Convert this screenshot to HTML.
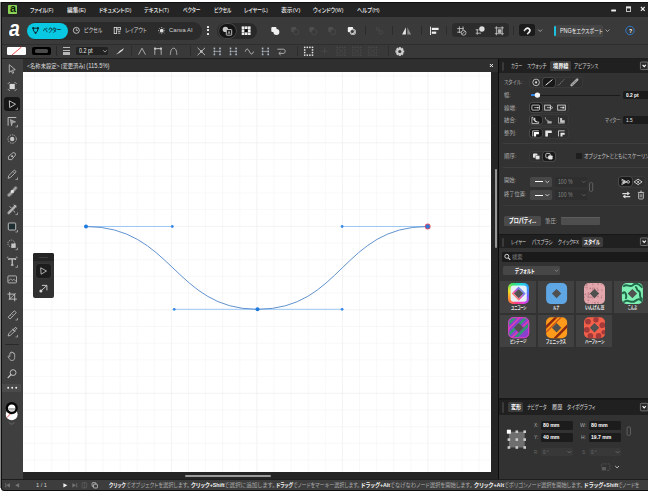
<!DOCTYPE html>
<html lang="ja"><head><meta charset="utf-8"><title>Affinity</title>
<style>
html,body{margin:0;padding:0;background:#fff;overflow:hidden;}
#app{position:relative;width:648px;height:495px;overflow:hidden;background:#fff;font-family:"Liberation Sans","Noto Sans CJK JP",sans-serif;font-feature-settings:"palt";}
#app div,#app svg,#app span.t{position:absolute;}
#app svg{overflow:visible;}
span.t{white-space:nowrap;line-height:10px;height:10px;transform-origin:0 50%;}
</style></head><body><div id="app">
<div style="left:0.00px;top:2.00px;width:1.00px;height:486.00px;background:#858585;"></div>
<div style="left:1.00px;top:2.00px;width:647.00px;height:489.00px;background:#101010;border-radius:0 0 0 3px"></div>
<div style="left:2.00px;top:2.60px;width:646.00px;height:14.40px;background:#242424;"></div>
<div style="left:2.00px;top:17.00px;width:646.00px;height:26.50px;background:#3a3a3a;"></div>
<div style="left:2.00px;top:44.00px;width:646.00px;height:14.00px;background:#393939;"></div>
<div style="left:2.00px;top:43.90px;width:646.00px;height:1.10px;background:#2e2e2e;"></div>
<div style="left:2.00px;top:57.90px;width:646.00px;height:1.10px;background:#1e1e1e;"></div>
<div style="left:2.00px;top:58.60px;width:20.50px;height:420.90px;background:#3f3f3f;"></div>
<div style="left:22.50px;top:59.00px;width:475.40px;height:13.10px;background:#2f2f2f;"></div>
<div style="left:22.50px;top:72.10px;width:475.40px;height:407.40px;background:#252525;"></div>
<div style="left:22.50px;top:72.10px;width:468.60px;height:399.70px;background:#ffffff;"></div>
<div style="left:497.90px;top:58.60px;width:1.30px;height:420.90px;background:#0c0c0c;"></div>
<div style="left:499.20px;top:58.60px;width:148.80px;height:420.90px;background:#323232;"></div>
<div style="left:2.00px;top:480.00px;width:646.00px;height:10.00px;background:#3d3d3d;border-radius:0 0 0 2.5px"></div>
<div style="left:1.80px;top:479.00px;width:646.20px;height:0.90px;background:#1e1e1e;"></div>
<div style="left:8.00px;top:4.50px;width:9.20px;height:9.10px;background:#8ad254;border-radius:0.8px"></div>
<span class="t" style="left:9.70px;top:3.30px;font-size:11.5px;color:#0c1a06;font-weight:700;transform:scaleX(0.937);">a</span>
<span class="t" style="left:30.00px;top:5.10px;font-size:6.2px;color:#f2f2f2;font-weight:500;transform:scaleX(0.794);">ファイル(F)</span>
<span class="t" style="left:66.70px;top:5.10px;font-size:6.2px;color:#f2f2f2;font-weight:500;transform:scaleX(0.921);">編集(E)</span>
<span class="t" style="left:98.70px;top:5.10px;font-size:6.2px;color:#f2f2f2;font-weight:500;transform:scaleX(0.804);">ドキュメント(D)</span>
<span class="t" style="left:144.00px;top:5.10px;font-size:6.2px;color:#f2f2f2;font-weight:500;transform:scaleX(0.849);">テキスト(T)</span>
<span class="t" style="left:182.70px;top:5.10px;font-size:6.2px;color:#f2f2f2;font-weight:500;transform:scaleX(0.749);">ベクター</span>
<span class="t" style="left:213.50px;top:5.10px;font-size:6.2px;color:#f2f2f2;font-weight:500;transform:scaleX(0.761);">ピクセル</span>
<span class="t" style="left:244.30px;top:5.10px;font-size:6.2px;color:#f2f2f2;font-weight:500;transform:scaleX(0.794);">レイヤー(L)</span>
<span class="t" style="left:281.30px;top:5.10px;font-size:6.2px;color:#f2f2f2;font-weight:500;transform:scaleX(0.941);">表示(V)</span>
<span class="t" style="left:313.30px;top:5.10px;font-size:6.2px;color:#f2f2f2;font-weight:500;transform:scaleX(0.838);">ウィンドウ(W)</span>
<span class="t" style="left:356.70px;top:5.10px;font-size:6.2px;color:#f2f2f2;font-weight:500;transform:scaleX(0.858);">ヘルプ(H)</span>
<svg style="left:611px;top:9px;" width="7" height="4" viewBox="0 0 7 4"><g transform="translate(0.20 0.50)"><rect x="0" y="0" width="4.8" height="2" rx="0.4" fill="#ececec"/></g></svg>
<svg style="left:626px;top:6px;" width="6" height="7" viewBox="0 0 6 7"><g transform="translate(0.00 0.50)"><rect x="0.4" y="0.4" width="4.2" height="4.6" fill="none" stroke="#e8e8e8" stroke-width="0.8"/><rect x="0.2" y="0.2" width="4.6" height="1.7" fill="#e8e8e8"/></g></svg>
<svg style="left:640px;top:6px;" width="7" height="7" viewBox="0 0 7 7"><g transform="translate(0.60 0.70)"><path d="M0.3 0.3L4.1 4.1M4.1 0.3L0.3 4.1" stroke="#ececec" stroke-width="1.15"/></g></svg>
<span class="t" style="left:26.50px;top:60.60px;font-size:6px;color:#dcdcdc;font-weight:400;transform:scaleX(0.879);">&lt;名称未設定&gt; [変更済み] <span style="font-size:1.1em">(115.5%)</span></span>
<svg style="left:489px;top:63px;" width="6" height="6" viewBox="0 0 6 6"><g transform="translate(0.60 0.70)"><path d="M0.3 0.3L3.3 3.3M3.3 0.3L0.3 3.3" stroke="#f0f0f0" stroke-width="1"/></g></svg>
<svg style="left:0px;top:0px;" width="649" height="496" viewBox="0 0 649 496"><g transform="translate(0.00 0.00)"><path d="M34.60 72.1V471.8" stroke="#f3f3f3" stroke-width="0.6"/><path d="M51.70 72.1V471.8" stroke="#f3f3f3" stroke-width="0.6"/><path d="M68.80 72.1V471.8" stroke="#f3f3f3" stroke-width="0.6"/><path d="M85.90 72.1V471.8" stroke="#e9e9e9" stroke-width="0.6"/><path d="M103.00 72.1V471.8" stroke="#f3f3f3" stroke-width="0.6"/><path d="M120.10 72.1V471.8" stroke="#f3f3f3" stroke-width="0.6"/><path d="M137.20 72.1V471.8" stroke="#f3f3f3" stroke-width="0.6"/><path d="M154.30 72.1V471.8" stroke="#f3f3f3" stroke-width="0.6"/><path d="M171.40 72.1V471.8" stroke="#e9e9e9" stroke-width="0.6"/><path d="M188.50 72.1V471.8" stroke="#f3f3f3" stroke-width="0.6"/><path d="M205.60 72.1V471.8" stroke="#f3f3f3" stroke-width="0.6"/><path d="M222.70 72.1V471.8" stroke="#f3f3f3" stroke-width="0.6"/><path d="M239.80 72.1V471.8" stroke="#f3f3f3" stroke-width="0.6"/><path d="M256.90 72.1V471.8" stroke="#e9e9e9" stroke-width="0.6"/><path d="M274.00 72.1V471.8" stroke="#f3f3f3" stroke-width="0.6"/><path d="M291.10 72.1V471.8" stroke="#f3f3f3" stroke-width="0.6"/><path d="M308.20 72.1V471.8" stroke="#f3f3f3" stroke-width="0.6"/><path d="M325.30 72.1V471.8" stroke="#f3f3f3" stroke-width="0.6"/><path d="M342.40 72.1V471.8" stroke="#e9e9e9" stroke-width="0.6"/><path d="M359.50 72.1V471.8" stroke="#f3f3f3" stroke-width="0.6"/><path d="M376.60 72.1V471.8" stroke="#f3f3f3" stroke-width="0.6"/><path d="M393.70 72.1V471.8" stroke="#f3f3f3" stroke-width="0.6"/><path d="M410.80 72.1V471.8" stroke="#f3f3f3" stroke-width="0.6"/><path d="M427.90 72.1V471.8" stroke="#e9e9e9" stroke-width="0.6"/><path d="M445.00 72.1V471.8" stroke="#f3f3f3" stroke-width="0.6"/><path d="M462.10 72.1V471.8" stroke="#f3f3f3" stroke-width="0.6"/><path d="M479.20 72.1V471.8" stroke="#f3f3f3" stroke-width="0.6"/><path d="M23 76.00H491.1" stroke="#f3f3f3" stroke-width="0.6"/><path d="M23 92.70H491.1" stroke="#f3f3f3" stroke-width="0.6"/><path d="M23 109.40H491.1" stroke="#f3f3f3" stroke-width="0.6"/><path d="M23 126.10H491.1" stroke="#f3f3f3" stroke-width="0.6"/><path d="M23 142.80H491.1" stroke="#e9e9e9" stroke-width="0.6"/><path d="M23 159.50H491.1" stroke="#f3f3f3" stroke-width="0.6"/><path d="M23 176.20H491.1" stroke="#f3f3f3" stroke-width="0.6"/><path d="M23 192.90H491.1" stroke="#f3f3f3" stroke-width="0.6"/><path d="M23 209.60H491.1" stroke="#f3f3f3" stroke-width="0.6"/><path d="M23 226.30H491.1" stroke="#e9e9e9" stroke-width="0.6"/><path d="M23 243.00H491.1" stroke="#f3f3f3" stroke-width="0.6"/><path d="M23 259.70H491.1" stroke="#f3f3f3" stroke-width="0.6"/><path d="M23 276.40H491.1" stroke="#f3f3f3" stroke-width="0.6"/><path d="M23 293.10H491.1" stroke="#f3f3f3" stroke-width="0.6"/><path d="M23 309.80H491.1" stroke="#e9e9e9" stroke-width="0.6"/><path d="M23 326.50H491.1" stroke="#f3f3f3" stroke-width="0.6"/><path d="M23 343.20H491.1" stroke="#f3f3f3" stroke-width="0.6"/><path d="M23 359.90H491.1" stroke="#f3f3f3" stroke-width="0.6"/><path d="M23 376.60H491.1" stroke="#f3f3f3" stroke-width="0.6"/><path d="M23 393.30H491.1" stroke="#e9e9e9" stroke-width="0.6"/><path d="M23 410.00H491.1" stroke="#f3f3f3" stroke-width="0.6"/><path d="M23 426.70H491.1" stroke="#f3f3f3" stroke-width="0.6"/><path d="M23 443.40H491.1" stroke="#f3f3f3" stroke-width="0.6"/><path d="M23 460.10H491.1" stroke="#f3f3f3" stroke-width="0.6"/></g></svg>
<svg style="left:0px;top:0px;" width="649" height="496" viewBox="0 0 649 496"><g transform="translate(0.00 0.00)"><path d="M86 226.5H172.3M174.2 309.3H342.1M342.1 226.5H427.7" stroke="#86bcf2" stroke-width="0.8" fill="none"/><path d="M86 226.5C172.3 226.5 174.2 309.3 257.5 309.3C342.1 309.3 342.1 226.5 427.7 226.5" stroke="#4f86c8" stroke-width="0.9" fill="none"/><circle cx="172.3" cy="226.5" r="1.4" fill="#3a8be6"/><circle cx="174.2" cy="309.3" r="1.4" fill="#3a8be6"/><circle cx="342.1" cy="309.3" r="1.4" fill="#3a8be6"/><circle cx="342.1" cy="226.5" r="1.4" fill="#3a8be6"/><circle cx="86" cy="226.5" r="2" fill="#1f7ae0"/><circle cx="257.5" cy="309.3" r="2" fill="#1f7ae0"/><circle cx="427.7" cy="226.5" r="2.9" fill="#e0566b"/><circle cx="427.7" cy="226.5" r="2.1" fill="#2a78d8"/></g></svg>
<div style="left:495.00px;top:168.60px;width:2.20px;height:79.90px;background:#959595;border-radius:1px"></div>
<div style="left:185.00px;top:474.90px;width:86.00px;height:1.80px;background:#9a9a9a;border-radius:1px"></div>
<span class="t" style="left:109.30px;top:480.20px;font-size:6px;color:#f0f0f0;font-weight:700;transform:scaleX(0.796);">クリック</span>
<span class="t" style="left:126.00px;top:480.20px;font-size:6px;color:#a8a8a8;font-weight:400;transform:scaleX(0.869);">でオブジェクトを選択します。</span>
<span class="t" style="left:190.70px;top:480.20px;font-size:6px;color:#f0f0f0;font-weight:700;transform:scaleX(0.889);">クリック+Shift</span>
<span class="t" style="left:224.30px;top:480.20px;font-size:6px;color:#a8a8a8;font-weight:400;transform:scaleX(0.949);">で選択に追加します。</span>
<span class="t" style="left:276.30px;top:480.20px;font-size:6px;color:#f0f0f0;font-weight:700;transform:scaleX(0.790);">ドラッグ</span>
<span class="t" style="left:293.30px;top:480.20px;font-size:6px;color:#a8a8a8;font-weight:400;transform:scaleX(0.837);">でノードをマーキー選択します。</span>
<span class="t" style="left:361.00px;top:480.20px;font-size:6px;color:#f0f0f0;font-weight:700;transform:scaleX(0.878);">ドラッグ+Alt</span>
<span class="t" style="left:390.00px;top:480.20px;font-size:6px;color:#a8a8a8;font-weight:400;transform:scaleX(0.888);">でなげなわノード選択を開始します。</span>
<span class="t" style="left:473.70px;top:480.20px;font-size:6px;color:#f0f0f0;font-weight:700;transform:scaleX(0.924);">クリック+Alt</span>
<span class="t" style="left:503.70px;top:480.20px;font-size:6px;color:#a8a8a8;font-weight:400;transform:scaleX(0.874);">でポリゴンノード選択を開始します。</span>
<span class="t" style="left:583.70px;top:480.20px;font-size:6px;color:#f0f0f0;font-weight:700;transform:scaleX(0.894);">ドラッグ+Shift</span>
<span class="t" style="left:618.00px;top:480.20px;font-size:6px;color:#a8a8a8;font-weight:400;transform:scaleX(0.805);">でノードを</span>
<span class="t" style="left:35.80px;top:480.20px;font-size:6px;color:#d0d0d0;font-weight:500;transform:scaleX(0.933);">1 / 1</span>
<svg style="left:5px;top:483px;" width="7" height="6" viewBox="0 0 7 6"><g transform="translate(0.40 0.00)"><path d="M0.4 0.2V4.4" stroke="#777" stroke-width="0.8"/><path d="M4.5 0.2V4.4L1 2.3Z" fill="#777"/></g></svg>
<svg style="left:14px;top:483px;" width="7" height="6" viewBox="0 0 7 6"><g transform="translate(0.80 0.00)"><path d="M4.3 0.2V4.4L0.3 2.3Z" fill="#777"/></g></svg>
<svg style="left:63px;top:483px;" width="7" height="6" viewBox="0 0 7 6"><g transform="translate(0.20 0.00)"><path d="M0.2 0.2V4.4L4.2 2.3Z" fill="#f0f0f0"/></g></svg>
<svg style="left:72px;top:483px;" width="7" height="6" viewBox="0 0 7 6"><g transform="translate(0.20 0.00)"><path d="M0.2 0.2V4.4L3.7 2.3Z" fill="#777"/><path d="M4.5 0.2V4.4" stroke="#777" stroke-width="0.8"/></g></svg>
<svg style="left:81px;top:482px;" width="8" height="8" viewBox="0 0 8 8"><g transform="translate(0.70 0.30)"><rect x="0.4" y="0.4" width="4.6" height="5.2" rx="0.6" fill="none" stroke="#666" stroke-width="0.7"/><path d="M2.7 0.4V5.6" stroke="#666" stroke-width="0.6"/></g></svg>
<svg style="left:91px;top:482px;" width="9" height="8" viewBox="0 0 9 8"><g transform="translate(0.70 0.30)"><rect x="0.4" y="0.4" width="3.8" height="3.8" rx="0.6" fill="none" stroke="#ddd" stroke-width="0.7"/><rect x="1.9" y="1.9" width="3.8" height="3.8" rx="0.6" fill="#3a3a3a" stroke="#ddd" stroke-width="0.7"/></g></svg>
<span class="t" style="left:8.80px;top:24.20px;font-size:21.5px;color:#ffffff;font-weight:700;transform:scaleX(0.902);font-style:italic;">a</span>
<div style="left:26.50px;top:21.80px;width:175.00px;height:17.80px;background:#2b2b2b;border-radius:9px"></div>
<div style="left:27.30px;top:22.80px;width:40.90px;height:15.90px;background:#08c8e2;border-radius:8px"></div>
<span class="t" style="left:42.60px;top:25.40px;font-size:6.2px;color:#0c2a33;font-weight:500;transform:scaleX(0.801);">ベクター</span>
<span class="t" style="left:83.50px;top:25.40px;font-size:6.2px;color:#d2d2d2;font-weight:400;transform:scaleX(0.804);">ピクセル</span>
<span class="t" style="left:124.70px;top:25.40px;font-size:6.2px;color:#d2d2d2;font-weight:400;transform:scaleX(0.804);">レイアウト</span>
<span class="t" style="left:168.60px;top:25.40px;font-size:6.2px;color:#d2d2d2;font-weight:400;transform:scaleX(0.936);">Canva AI</span>
<svg style="left:31px;top:26px;" width="10" height="10" viewBox="0 0 10 10"><g transform="translate(0.90 0.60)"><path d="M1.3 1.6H6.1M1.3 1.6C1.3 4.2 2.4 5.6 3.7 6.2C5 5.6 6.1 4.2 6.1 1.6" fill="none" stroke="#0c2a33" stroke-width="1"/><circle cx="1.3" cy="1.6" r="1.1" fill="#0c2a33"/><circle cx="6.1" cy="1.6" r="1.1" fill="#0c2a33"/><circle cx="3.7" cy="6.2" r="1.1" fill="#0c2a33"/></g></svg>
<svg style="left:72px;top:26px;" width="9" height="9" viewBox="0 0 9 9"><g transform="translate(0.80 0.90)"><circle cx="3.5" cy="3.5" r="3" fill="none" stroke="#ddd" stroke-width="0.8"/><path d="M3.5 3.5V1.6M3.5 3.5H5.2" stroke="#ddd" stroke-width="0.7"/></g></svg>
<svg style="left:113px;top:27px;" width="9" height="8" viewBox="0 0 9 8"><g transform="translate(0.80 0.00)"><rect x="0.4" y="0.4" width="2.4" height="6.2" fill="none" stroke="#ddd" stroke-width="0.8"/><rect x="4" y="0.4" width="2.6" height="2.4" fill="none" stroke="#ddd" stroke-width="0.8"/><path d="M4 4.4H6.6M4 6.2H6.6" stroke="#ddd" stroke-width="0.8"/></g></svg>
<svg style="left:157px;top:26px;" width="9" height="10" viewBox="0 0 9 10"><g transform="translate(0.50 0.70)"><circle cx="4.2" cy="4" r="1.9" fill="#ddd"/><path d="M4.2 0.3V1.3M4.2 6.7V7.5M0.5 4H1.5M6.9 4H7.5M1.5 1.4L2.2 2.1M6.2 5.9L6.8 6.5M6.8 1.4L6.2 2.1M1.6 6.5L2.2 5.9" stroke="#ddd" stroke-width="0.8"/></g></svg>
<div style="left:206.50px;top:25.60px;width:2.60px;height:2.20px;background:#f0f0f0;border-radius:0.6px"></div>
<div style="left:206.50px;top:29.20px;width:2.60px;height:2.20px;background:#f0f0f0;border-radius:0.6px"></div>
<div style="left:206.50px;top:32.80px;width:2.60px;height:2.20px;background:#f0f0f0;border-radius:0.6px"></div>
<div style="left:217.30px;top:23.20px;width:39.50px;height:15.50px;background:#292929;border-radius:8px"></div>
<div style="left:218.70px;top:24.30px;width:17.60px;height:13.40px;background:#151515;border-radius:7px;box-shadow:0 0 0 0.7px #505050"></div>
<svg style="left:222px;top:26px;" width="12" height="12" viewBox="0 0 12 12"><g transform="translate(0.40 0.40)"><circle cx="3" cy="3" r="2.7" fill="#c8c8c8"/><rect x="3.9" y="3.2" width="5.4" height="5.6" rx="0.6" fill="#151515" stroke="#e8e8e8" stroke-width="0.8"/><path d="M5.5 7.6L6.6 4.8L7.7 7.6M5.9 6.7H7.3" stroke="#e8e8e8" stroke-width="0.5" fill="none"/></g></svg>
<svg style="left:241px;top:26px;" width="11" height="11" viewBox="0 0 11 11"><g transform="translate(0.70 0.40)"><rect x="0.0" y="0.0" width="2.7" height="2.6" fill="#f0f0f0"/><rect x="0.0" y="3.0" width="2.7" height="2.6" fill="#f0f0f0"/><rect x="0.0" y="6.0" width="2.7" height="2.6" fill="#f0f0f0"/><rect x="3.1" y="0.0" width="2.7" height="2.6" fill="#f0f0f0"/><rect x="3.1" y="3.0" width="2.7" height="2.6" fill="#0c0c0c"/><rect x="3.1" y="6.0" width="2.7" height="2.6" fill="#f0f0f0"/><rect x="6.2" y="0.0" width="2.7" height="2.6" fill="#f0f0f0"/><rect x="6.2" y="3.0" width="2.7" height="2.6" fill="#f0f0f0"/><rect x="6.2" y="6.0" width="2.7" height="2.6" fill="#f0f0f0"/></g></svg>
<svg style="left:271px;top:26px;" width="10" height="11" viewBox="0 0 10 11"><g transform="translate(0.00 0.60)"><rect x="0.3" y="0.3" width="5.2" height="5.2" rx="1" fill="#f0f0f0"/><circle cx="5.4" cy="5.4" r="3" fill="#f0f0f0"/></g></svg>
<svg style="left:290px;top:26px;" width="11" height="11" viewBox="0 0 11 11"><g transform="translate(0.80 0.60)"><rect x="0.4" y="0.4" width="5" height="5" rx="1" fill="#4e4e4e"/><circle cx="5.4" cy="5.4" r="2.7" fill="#3a3a3a" stroke="#4e4e4e" stroke-width="0.7"/></g></svg>
<svg style="left:308px;top:26px;" width="11" height="11" viewBox="0 0 11 11"><g transform="translate(0.80 0.60)"><rect x="0.4" y="0.4" width="5" height="5" rx="1" fill="#4e4e4e"/><circle cx="5.4" cy="5.4" r="2.7" fill="#3a3a3a" stroke="#4e4e4e" stroke-width="0.7"/></g></svg>
<svg style="left:327px;top:26px;" width="11" height="11" viewBox="0 0 11 11"><g transform="translate(0.80 0.60)"><rect x="0.4" y="0.4" width="5" height="5" rx="1" fill="#4e4e4e"/><circle cx="5.4" cy="5.4" r="2.7" fill="#3a3a3a" stroke="#4e4e4e" stroke-width="0.7"/></g></svg>
<svg style="left:347px;top:26px;" width="10" height="11" viewBox="0 0 10 11"><g transform="translate(0.50 0.60)"><rect x="0.3" y="0.3" width="5.4" height="5.4" rx="1" fill="#f0f0f0"/><circle cx="5.4" cy="5.4" r="3" fill="#f0f0f0"/><circle cx="4.9" cy="4.9" r="1.6" fill="#3a3a3a"/><circle cx="5.4" cy="5.4" r="2.2" fill="none" stroke="#3a3a3a" stroke-width="0.5"/></g></svg>
<div style="left:365.40px;top:25.70px;width:0.80px;height:9.50px;background:#2c2c2c;"></div>
<div style="left:392.10px;top:25.70px;width:0.80px;height:9.50px;background:#2c2c2c;"></div>
<div style="left:420.50px;top:25.70px;width:0.80px;height:9.50px;background:#2c2c2c;"></div>
<div style="left:446.40px;top:25.70px;width:0.80px;height:9.50px;background:#2c2c2c;"></div>
<div style="left:513.20px;top:25.70px;width:0.80px;height:9.50px;background:#2c2c2c;"></div>
<svg style="left:375px;top:26px;" width="10" height="10" viewBox="0 0 10 10"><g transform="translate(0.40 0.80)"><circle cx="2.2" cy="2.2" r="1.5" fill="none" stroke="#4e4e4e" stroke-width="0.7"/><circle cx="5.6" cy="5.6" r="1.8" fill="none" stroke="#4e4e4e" stroke-width="0.7"/><path d="M3.2 3.2L4.4 4.4" stroke="#4e4e4e" stroke-width="0.7"/></g></svg>
<svg style="left:401px;top:26px;" width="12" height="11" viewBox="0 0 12 11"><g transform="translate(0.60 0.60)"><path d="M4.3 0.6V8L0.5 8Z" fill="#e6e6e6"/><path d="M5.7 0.6V8L9.5 8Z" fill="#8c8c8c"/></g></svg>
<svg style="left:430px;top:26px;" width="10" height="11" viewBox="0 0 10 11"><g transform="translate(0.00 0.60)"><path d="M0.5 0V8.4" stroke="#f0f0f0" stroke-width="0.9"/><rect x="1.8" y="1.2" width="6.8" height="2.2" fill="#f0f0f0"/><rect x="1.8" y="5" width="4.4" height="2.2" fill="#f0f0f0"/></g></svg>
<div style="left:451.80px;top:23.40px;width:57.20px;height:14.10px;background:#2c2c2c;border-radius:4px"></div>
<svg style="left:457px;top:26px;" width="11" height="11" viewBox="0 0 11 11"><g transform="translate(0.20 0.40)"><path d="M0 2.2H6.6M2.2 0V6.6M0 5.8H4M5.8 0V4" stroke="#cdcdcd" stroke-width="0.8" fill="none"/><circle cx="6.4" cy="6.4" r="2.4" fill="#2a2a2a" stroke="#cdcdcd" stroke-width="0.8"/><path d="M4.9 7.6L7.8 5" stroke="#cdcdcd" stroke-width="0.7"/></g></svg>
<svg style="left:475px;top:26px;" width="11" height="11" viewBox="0 0 11 11"><g transform="translate(0.70 0.20)"><path d="M1.6 3.4V8.6M0 7H5.4M0 3.6H3" stroke="#cdcdcd" stroke-width="0.8" fill="none"/><circle cx="6.2" cy="2.8" r="2.7" fill="#dcdcdc"/></g></svg>
<svg style="left:494px;top:26px;" width="11" height="11" viewBox="0 0 11 11"><g transform="translate(0.80 0.30)"><path d="M0 1.6H9M0 7.4H9M1.6 0V9M7.4 0V9" stroke="#cdcdcd" stroke-width="0.8"/><rect x="3" y="3" width="3.6" height="3.6" fill="#b8b8b8"/></g></svg>
<div style="left:518.90px;top:24.20px;width:16.30px;height:12.20px;background:#1b1b1b;border-radius:2.5px"></div>
<svg style="left:522px;top:26px;" width="11" height="11" viewBox="0 0 11 11"><g transform="translate(0.90 0.20)"><g transform="rotate(45 4.5 4.5)"><path d="M2.2 7V4.3A2.3 2.3 0 0 1 6.8 4.3V7" fill="none" stroke="#f4f4f4" stroke-width="1.6"/><path d="M1.3 5.9H3.1M5.9 5.9H7.7" stroke="#1a1a1a" stroke-width="0.45"/></g></g></svg>
<svg style="left:538px;top:29px;" width="6" height="5" viewBox="0 0 6 5"><g transform="translate(0.00 0.20)"><path d="M0.3 0.4L2.2 2.3L4.1 0.4" fill="none" stroke="#ccc" stroke-width="0.7"/></g></svg>
<div style="left:554.00px;top:25.20px;width:49.40px;height:11.40px;background:#444444;border-radius:1.5px"></div>
<div style="left:554.40px;top:25.60px;width:1.80px;height:10.60px;background:#19c3e0;border-radius:1px"></div>
<span class="t" style="left:559.80px;top:25.80px;font-size:6.2px;color:#f0f0f0;font-weight:400;transform:scaleX(0.782);"><span style="font-size:1.12em">PNG</span>をエクスポート</span>
<svg style="left:605px;top:29px;" width="6" height="5" viewBox="0 0 6 5"><g transform="translate(0.30 0.20)"><path d="M0.3 0.4L2.2 2.3L4.1 0.4" fill="none" stroke="#ccc" stroke-width="0.7"/></g></svg>
<svg style="left:625px;top:25px;" width="11" height="12" viewBox="0 0 11 12"><g transform="translate(0.00 0.50)"><circle cx="5" cy="5" r="4.2" fill="none" stroke="#2b80d8" stroke-width="0.9"/></g></svg>
<span class="t" style="left:628.50px;top:25.70px;font-size:6px;color:#ffffff;font-weight:700;transform:scaleX(0.871);">?</span>
<svg style="left:7px;top:47px;" width="20" height="9" viewBox="0 0 20 9"><g transform="translate(0.00 0.00)"><rect x="0" y="0" width="19" height="8" rx="1.2" fill="#fff"/><path d="M5 8L14.5 0" stroke="#f03a3a" stroke-width="0.9"/></g></svg>
<div style="left:32.00px;top:47.00px;width:19.00px;height:8.00px;background:#000;border-radius:2px"></div>
<div style="left:34.60px;top:49.40px;width:13.80px;height:3.20px;background:#4a4a4a;border-radius:1.6px"></div>
<div style="left:56.20px;top:46.40px;width:0.80px;height:9.40px;background:#292929;"></div>
<div style="left:63.00px;top:47.40px;width:7.40px;height:1.10px;background:#b8b8b8;"></div>
<div style="left:63.00px;top:49.60px;width:7.40px;height:1.70px;background:#b8b8b8;"></div>
<div style="left:63.00px;top:52.30px;width:7.40px;height:2.40px;background:#b8b8b8;"></div>
<div style="left:76.00px;top:46.60px;width:32.40px;height:8.80px;background:#222222;border-radius:1.5px"></div>
<span class="t" style="left:79.30px;top:46.10px;font-size:6.4px;color:#f0f0f0;font-weight:400;transform:scaleX(0.844);">0.2 pt</span>
<svg style="left:102px;top:49px;" width="7" height="5" viewBox="0 0 7 5"><g transform="translate(0.80 0.80)"><path d="M0.3 0.4L2.2 2.3L4.1 0.4" fill="none" stroke="#ccc" stroke-width="0.7"/></g></svg>
<svg style="left:115px;top:47px;" width="10" height="9" viewBox="0 0 10 9"><g transform="translate(0.60 0.40)"><path d="M0.3 6.8C2.5 6.2 3.4 4 4.6 3.2C6 2.2 7.4 1.8 8.1 0.4C8.2 2.2 7 3.4 5.4 4.4C4 5.2 2.6 6.8 0.3 6.8Z" fill="#e0e0e0"/></g></svg>
<div style="left:130.60px;top:46.40px;width:0.80px;height:9.60px;background:#2d2d2d;"></div>
<div style="left:190.00px;top:46.40px;width:0.80px;height:9.60px;background:#2d2d2d;"></div>
<div style="left:297.10px;top:46.40px;width:0.80px;height:9.60px;background:#2d2d2d;"></div>
<div style="left:388.40px;top:46.40px;width:0.80px;height:9.60px;background:#2d2d2d;"></div>
<svg style="left:138px;top:47px;" width="9" height="10" viewBox="0 0 9 10"><g transform="translate(0.00 0.20)"><path d="M0.6 7.4L4 1L7.4 7.4" fill="none" stroke="#c6c6c6" stroke-width="0.8"/></g></svg>
<svg style="left:154px;top:47px;" width="9" height="10" viewBox="0 0 9 10"><g transform="translate(0.00 0.20)"><path d="M0.8 7.6V3.6C0.8 1.8 2 1.4 4 1.4C6 1.4 7.2 1.8 7.2 3.6V7.6" fill="none" stroke="#c6c6c6" stroke-width="0.8"/><rect x="0" y="0.4" width="2" height="2" fill="#c6c6c6"/><rect x="6" y="0.4" width="2" height="2" fill="#c6c6c6"/><path d="M2 1.4H6" stroke="#c6c6c6" stroke-width="0.6"/></g></svg>
<svg style="left:169px;top:47px;" width="10" height="10" viewBox="0 0 10 10"><g transform="translate(0.60 0.20)"><path d="M0.8 7.6C0.8 4 1.8 1 4 1C6.2 1 7.2 4 7.2 7.6" fill="none" stroke="#c6c6c6" stroke-width="0.8"/></g></svg>
<svg style="left:196px;top:47px;" width="11" height="10" viewBox="0 0 11 10"><g transform="translate(0.80 0.00)"><path d="M0.8 0.8L8.2 8.2M8.2 0.8L0.8 8.2" stroke="#c6c6c6" stroke-width="0.9"/><circle cx="4.5" cy="4.5" r="1.2" fill="#c6c6c6"/></g></svg>
<svg style="left:213px;top:47px;" width="9" height="10" viewBox="0 0 9 10"><g transform="translate(0.60 0.20)"><path d="M0.8 0.6V8M6.4 0.6V8" stroke="#7c8692" stroke-width="0.5"/><rect x="0" y="0.4" width="1.6" height="1.6" fill="#aeb8c4"/><rect x="0" y="3.4" width="1.6" height="1.6" fill="#aeb8c4"/><rect x="0" y="6.4" width="1.6" height="1.6" fill="#aeb8c4"/><rect x="5.6" y="0.4" width="1.6" height="1.6" fill="#aeb8c4"/><rect x="5.6" y="3.4" width="1.6" height="1.6" fill="#aeb8c4"/><rect x="5.6" y="6.4" width="1.6" height="1.6" fill="#aeb8c4"/><path d="M1.6 4.2H5.6" stroke="#aeb8c4" stroke-width="0.7"/></g></svg>
<svg style="left:229px;top:47px;" width="9" height="10" viewBox="0 0 9 10"><g transform="translate(0.70 0.20)"><path d="M0.8 0.6V8M6.4 0.6V8" stroke="#7c8692" stroke-width="0.5"/><rect x="0" y="0.4" width="1.6" height="1.6" fill="#aeb8c4"/><rect x="0" y="3.4" width="1.6" height="1.6" fill="#aeb8c4"/><rect x="0" y="6.4" width="1.6" height="1.6" fill="#aeb8c4"/><rect x="5.6" y="0.4" width="1.6" height="1.6" fill="#aeb8c4"/><rect x="5.6" y="3.4" width="1.6" height="1.6" fill="#aeb8c4"/><rect x="5.6" y="6.4" width="1.6" height="1.6" fill="#aeb8c4"/><path d="M1.6 4.2H5.6" stroke="#aeb8c4" stroke-width="0.7"/></g></svg>
<svg style="left:244px;top:48px;" width="11" height="8" viewBox="0 0 11 8"><g transform="translate(0.90 0.00)"><path d="M0.4 3.6C1.4 0.2 2.8 0.2 4.4 3.4C6 6.8 7.4 6.8 8.6 3.6" fill="none" stroke="#c6c6c6" stroke-width="0.9"/></g></svg>
<svg style="left:261px;top:47px;" width="9" height="10" viewBox="0 0 9 10"><g transform="translate(0.80 0.20)"><path d="M0.8 0.6V8M6.4 0.6V8" stroke="#7c8692" stroke-width="0.5"/><rect x="0" y="0.4" width="1.6" height="1.6" fill="#aeb8c4"/><rect x="0" y="3.4" width="1.6" height="1.6" fill="#aeb8c4"/><rect x="0" y="6.4" width="1.6" height="1.6" fill="#aeb8c4"/><rect x="5.6" y="0.4" width="1.6" height="1.6" fill="#aeb8c4"/><rect x="5.6" y="3.4" width="1.6" height="1.6" fill="#aeb8c4"/><rect x="5.6" y="6.4" width="1.6" height="1.6" fill="#aeb8c4"/><path d="M1.6 4.2H5.6" stroke="#aeb8c4" stroke-width="0.7"/></g></svg>
<svg style="left:277px;top:48px;" width="10" height="9" viewBox="0 0 10 9"><g transform="translate(0.00 0.20)"><path d="M0.4 1H6.4C8.8 1 8.8 5.2 6.4 5.2H2.4" fill="none" stroke="#c6c6c6" stroke-width="0.8"/><path d="M3.6 3.6L1.8 5.2L3.6 6.8" fill="none" stroke="#c6c6c6" stroke-width="0.8"/></g></svg>
<svg style="left:303px;top:46px;" width="12" height="11" viewBox="0 0 12 11"><g transform="translate(0.95 0.60)"><rect x="0.0" y="0" width="1.5" height="1.5" fill="#e6e6e6"/><rect x="0.0" y="7.8" width="1.5" height="1.5" fill="#e6e6e6"/><rect x="2.6" y="0" width="1.5" height="1.5" fill="#e6e6e6"/><rect x="2.6" y="7.8" width="1.5" height="1.5" fill="#e6e6e6"/><rect x="0" y="2.6" width="1.5" height="1.5" fill="#e6e6e6"/><rect x="7.8" y="2.6" width="1.5" height="1.5" fill="#e6e6e6"/><rect x="5.2" y="0" width="1.5" height="1.5" fill="#e6e6e6"/><rect x="5.2" y="7.8" width="1.5" height="1.5" fill="#e6e6e6"/><rect x="0" y="5.2" width="1.5" height="1.5" fill="#e6e6e6"/><rect x="7.8" y="5.2" width="1.5" height="1.5" fill="#e6e6e6"/><rect x="7.8" y="0" width="1.5" height="1.5" fill="#e6e6e6"/><rect x="7.8" y="7.8" width="1.5" height="1.5" fill="#e6e6e6"/></g></svg>
<svg style="left:319px;top:46px;" width="12" height="11" viewBox="0 0 12 11"><g transform="translate(0.95 0.60)"><rect x="0.0" y="0" width="1.5" height="1.5" fill="#3c3c3c"/><rect x="0.0" y="7.8" width="1.5" height="1.5" fill="#3c3c3c"/><rect x="2.6" y="0" width="1.5" height="1.5" fill="#3c3c3c"/><rect x="2.6" y="7.8" width="1.5" height="1.5" fill="#3c3c3c"/><rect x="0" y="2.6" width="1.5" height="1.5" fill="#3c3c3c"/><rect x="7.8" y="2.6" width="1.5" height="1.5" fill="#3c3c3c"/><rect x="5.2" y="0" width="1.5" height="1.5" fill="#3c3c3c"/><rect x="5.2" y="7.8" width="1.5" height="1.5" fill="#3c3c3c"/><rect x="0" y="5.2" width="1.5" height="1.5" fill="#3c3c3c"/><rect x="7.8" y="5.2" width="1.5" height="1.5" fill="#3c3c3c"/><rect x="7.8" y="0" width="1.5" height="1.5" fill="#3c3c3c"/><rect x="7.8" y="7.8" width="1.5" height="1.5" fill="#3c3c3c"/><path d="M4.65 1.6V7.7M1.6 4.65H7.7" stroke="#484848" stroke-width="0.9"/></g></svg>
<svg style="left:336px;top:46px;" width="11" height="11" viewBox="0 0 11 11"><g transform="translate(0.35 0.60)"><rect x="0.0" y="0" width="1.5" height="1.5" fill="#484848"/><rect x="0.0" y="7.8" width="1.5" height="1.5" fill="#484848"/><rect x="2.6" y="0" width="1.5" height="1.5" fill="#484848"/><rect x="2.6" y="7.8" width="1.5" height="1.5" fill="#484848"/><rect x="0" y="2.6" width="1.5" height="1.5" fill="#484848"/><rect x="7.8" y="2.6" width="1.5" height="1.5" fill="#484848"/><rect x="5.2" y="0" width="1.5" height="1.5" fill="#484848"/><rect x="5.2" y="7.8" width="1.5" height="1.5" fill="#484848"/><rect x="0" y="5.2" width="1.5" height="1.5" fill="#484848"/><rect x="7.8" y="5.2" width="1.5" height="1.5" fill="#484848"/><rect x="7.8" y="0" width="1.5" height="1.5" fill="#484848"/><rect x="7.8" y="7.8" width="1.5" height="1.5" fill="#484848"/><path d="M2 2L7.3 7.3M7.3 2L2 7.3" stroke="#484848" stroke-width="0.8"/></g></svg>
<svg style="left:352px;top:46px;" width="11" height="11" viewBox="0 0 11 11"><g transform="translate(0.05 0.60)"><rect x="0.0" y="0" width="1.5" height="1.5" fill="#484848"/><rect x="0.0" y="7.8" width="1.5" height="1.5" fill="#484848"/><rect x="2.6" y="0" width="1.5" height="1.5" fill="#484848"/><rect x="2.6" y="7.8" width="1.5" height="1.5" fill="#484848"/><rect x="0" y="2.6" width="1.5" height="1.5" fill="#484848"/><rect x="7.8" y="2.6" width="1.5" height="1.5" fill="#484848"/><rect x="5.2" y="0" width="1.5" height="1.5" fill="#484848"/><rect x="5.2" y="7.8" width="1.5" height="1.5" fill="#484848"/><rect x="0" y="5.2" width="1.5" height="1.5" fill="#484848"/><rect x="7.8" y="5.2" width="1.5" height="1.5" fill="#484848"/><rect x="7.8" y="0" width="1.5" height="1.5" fill="#484848"/><rect x="7.8" y="7.8" width="1.5" height="1.5" fill="#484848"/><path d="M2 2L7.3 7.3M7.3 2L2 7.3" stroke="#484848" stroke-width="0.8"/></g></svg>
<svg style="left:367px;top:46px;" width="12" height="11" viewBox="0 0 12 11"><g transform="translate(0.85 0.60)"><rect x="0.0" y="0" width="1.5" height="1.5" fill="#484848"/><rect x="0.0" y="7.8" width="1.5" height="1.5" fill="#484848"/><rect x="2.6" y="0" width="1.5" height="1.5" fill="#484848"/><rect x="2.6" y="7.8" width="1.5" height="1.5" fill="#484848"/><rect x="0" y="2.6" width="1.5" height="1.5" fill="#484848"/><rect x="7.8" y="2.6" width="1.5" height="1.5" fill="#484848"/><rect x="5.2" y="0" width="1.5" height="1.5" fill="#484848"/><rect x="5.2" y="7.8" width="1.5" height="1.5" fill="#484848"/><rect x="0" y="5.2" width="1.5" height="1.5" fill="#484848"/><rect x="7.8" y="5.2" width="1.5" height="1.5" fill="#484848"/><rect x="7.8" y="0" width="1.5" height="1.5" fill="#484848"/><rect x="7.8" y="7.8" width="1.5" height="1.5" fill="#484848"/><path d="M2 2L7.3 7.3M7.3 2L2 7.3" stroke="#484848" stroke-width="0.8"/></g></svg>
<svg style="left:395px;top:46px;" width="11" height="12" viewBox="0 0 11 12"><g transform="translate(0.00 0.70)"><g transform="translate(4.8 4.8)"><rect x="-1.1" y="-4.4" width="2.2" height="2.2" fill="#cfcfcf" transform="rotate(0)"/><rect x="-1.1" y="-4.4" width="2.2" height="2.2" fill="#cfcfcf" transform="rotate(45)"/><rect x="-1.1" y="-4.4" width="2.2" height="2.2" fill="#cfcfcf" transform="rotate(90)"/><rect x="-1.1" y="-4.4" width="2.2" height="2.2" fill="#cfcfcf" transform="rotate(135)"/><rect x="-1.1" y="-4.4" width="2.2" height="2.2" fill="#cfcfcf" transform="rotate(180)"/><rect x="-1.1" y="-4.4" width="2.2" height="2.2" fill="#cfcfcf" transform="rotate(225)"/><rect x="-1.1" y="-4.4" width="2.2" height="2.2" fill="#cfcfcf" transform="rotate(270)"/><rect x="-1.1" y="-4.4" width="2.2" height="2.2" fill="#cfcfcf" transform="rotate(315)"/><circle r="3.3" fill="#cfcfcf"/><circle r="1.6" fill="#393939"/></g></g></svg>
<svg style="left:6px;top:63px;" width="13" height="13" viewBox="0 0 13 13"><g transform="translate(0.70 0.50)"><path d="M2.6 1.2L8.6 6.2L5.8 6.6L7 9.4L5.8 9.9L4.6 7.2L2.6 8.8Z" fill="none" stroke="#c6c6c6" stroke-width="0.8" stroke-linejoin="round"/></g></svg>
<svg style="left:6px;top:81px;" width="13" height="12" viewBox="0 0 13 12"><g transform="translate(0.70 0.00)"><rect x="2.9" y="2.9" width="5.2" height="5.2" fill="#d8d8d8"/><path d="M1 2.6H2M1 8.4H2M9 2.6H10M9 8.4H10M2.6 1V2M8.4 1V2M2.6 9V10M8.4 9V10" stroke="#c6c6c6" stroke-width="0.8"/></g></svg>
<div style="left:4.40px;top:97.40px;width:15.20px;height:13.80px;background:#171717;border-radius:3px"></div>
<svg style="left:6px;top:98px;" width="13" height="13" viewBox="0 0 13 13"><g transform="translate(0.70 0.80)"><path d="M2.6 2L8.8 5.4L3 8.8Z" fill="none" stroke="#d4d4d4" stroke-width="0.85" stroke-linejoin="round"/><path d="M10.8 8.8V10.8H8.8" fill="none" stroke="#bdbdbd" stroke-width="0.7"/></g></svg>
<svg style="left:6px;top:116px;" width="13" height="13" viewBox="0 0 13 13"><g transform="translate(0.70 0.10)"><path d="M1.4 1.4H9.6M1.4 1.4V9.6" stroke="#c6c6c6" stroke-width="0.9"/><path d="M3.6 3.4L9 5.8L5.8 6.6L4.8 9.8Z" fill="#9a9a9a" stroke="#c6c6c6" stroke-width="0.5" stroke-linejoin="round"/><path d="M10.8 8.8V10.8H8.8" fill="none" stroke="#bdbdbd" stroke-width="0.7"/></g></svg>
<svg style="left:6px;top:133px;" width="13" height="13" viewBox="0 0 13 13"><g transform="translate(0.70 0.50)"><circle cx="5.5" cy="5.5" r="4.2" fill="none" stroke="#c6c6c6" stroke-width="0.8" stroke-dasharray="1.4 1"/><circle cx="5.5" cy="5.5" r="2.2" fill="#c6c6c6"/></g></svg>
<svg style="left:6px;top:150px;" width="13" height="13" viewBox="0 0 13 13"><g transform="translate(0.70 0.70)"><path d="M2 8.8L1.6 6L6 2.2C7.4 1.2 9.6 2.8 8.6 4.6L5 9Z" fill="none" stroke="#c6c6c6" stroke-width="0.8" stroke-linejoin="round"/><circle cx="5.4" cy="5.6" r="1" fill="#c6c6c6"/></g></svg>
<svg style="left:6px;top:168px;" width="13" height="13" viewBox="0 0 13 13"><g transform="translate(0.70 0.70)"><path d="M1.4 9.6L2 7L7.2 1.8C8 1 9.8 2.6 9 3.6L3.8 8.8Z" fill="none" stroke="#c6c6c6" stroke-width="0.8" stroke-linejoin="round"/><path d="M6.2 2.8L8 4.6" stroke="#c6c6c6" stroke-width="0.7"/><path d="M10.8 8.8V10.8H8.8" fill="none" stroke="#bdbdbd" stroke-width="0.7"/></g></svg>
<svg style="left:6px;top:186px;" width="13" height="13" viewBox="0 0 13 13"><g transform="translate(0.70 0.10)"><path d="M2.2 9C4 8 5 6.4 6 5.2S8 3 9 1.8" stroke="#777" stroke-width="3.6" stroke-linecap="round" fill="none"/><path d="M2.2 9C4 8 5 6.4 6 5.2S8 3 9 1.8" stroke="#a8a8a8" stroke-width="1.8" stroke-linecap="round" fill="none"/><rect x="4.2" y="4" width="2.8" height="2.8" fill="#e4e4e4"/></g></svg>
<svg style="left:6px;top:203px;" width="13" height="13" viewBox="0 0 13 13"><g transform="translate(0.70 0.80)"><path d="M2 9.2L8.6 2.4" stroke="#a0a0a0" stroke-width="2.6" stroke-linecap="round"/><path d="M2 9.2L8.6 2.4" stroke="#c6c6c6" stroke-width="1"/><path d="M3 2.6L4.6 4.2M6.6 7L8.4 8.6M7 0.8L9.6 3.4" stroke="#c6c6c6" stroke-width="0.9"/><path d="M10.8 8.8V10.8H8.8" fill="none" stroke="#bdbdbd" stroke-width="0.7"/></g></svg>
<svg style="left:6px;top:221px;" width="13" height="13" viewBox="0 0 13 13"><g transform="translate(0.70 0.20)"><rect x="1.6" y="1.8" width="7.4" height="7" rx="0.8" fill="#1e2e30" stroke="#c6c6c6" stroke-width="0.9"/><path d="M10.8 8.8V10.8H8.8" fill="none" stroke="#bdbdbd" stroke-width="0.7"/></g></svg>
<svg style="left:6px;top:238px;" width="13" height="13" viewBox="0 0 13 13"><g transform="translate(0.70 0.90)"><circle cx="4.6" cy="4.6" r="3.4" fill="none" stroke="#c6c6c6" stroke-width="0.8" stroke-dasharray="1.2 1"/><rect x="4.6" y="4.6" width="4.4" height="4.4" fill="#c6c6c6"/><path d="M10.8 8.8V10.8H8.8" fill="none" stroke="#bdbdbd" stroke-width="0.7"/></g></svg>
<svg style="left:6px;top:256px;" width="13" height="13" viewBox="0 0 13 13"><g transform="translate(0.70 0.50)"><path d="M2.2 3.6V2.4H8.8V3.6M5.5 2.4V8.6M4.2 8.6H6.8" fill="none" stroke="#c6c6c6" stroke-width="1.25"/><path d="M0.6 1.8V0.6H1.8M9.2 0.6H10.4V1.8" fill="none" stroke="#c6c6c6" stroke-width="0.6"/><path d="M10.8 8.8V10.8H8.8" fill="none" stroke="#bdbdbd" stroke-width="0.7"/></g></svg>
<svg style="left:6px;top:273px;" width="13" height="13" viewBox="0 0 13 13"><g transform="translate(0.70 0.90)"><rect x="1.2" y="2" width="8.6" height="7" rx="0.8" fill="none" stroke="#c6c6c6" stroke-width="0.8"/><path d="M1.6 7.4L4 5L5.6 6.6L7.2 5.4L9.4 7.4" fill="none" stroke="#c6c6c6" stroke-width="0.7"/></g></svg>
<svg style="left:6px;top:291px;" width="13" height="13" viewBox="0 0 13 13"><g transform="translate(0.70 0.10)"><path d="M3 0.8V8H10.2M0.8 3H8V10.2" fill="none" stroke="#c6c6c6" stroke-width="0.9"/><path d="M2 9L9 2" stroke="#c6c6c6" stroke-width="0.8"/></g></svg>
<svg style="left:6px;top:309px;" width="13" height="13" viewBox="0 0 13 13"><g transform="translate(0.70 0.20)"><path d="M1.4 8L7.6 1.6L9.6 3.4L3.4 9.8Z" fill="none" stroke="#c6c6c6" stroke-width="0.8" stroke-linejoin="round"/><path d="M3.4 6L4.6 7.2M5 4.4L6.2 5.6" stroke="#c6c6c6" stroke-width="0.6"/><path d="M10.8 8.8V10.8H8.8" fill="none" stroke="#bdbdbd" stroke-width="0.7"/></g></svg>
<svg style="left:6px;top:326px;" width="13" height="13" viewBox="0 0 13 13"><g transform="translate(0.70 0.20)"><path d="M1.4 9.8L2 7.6L6 3.4L7.8 5.2L3.6 9.2Z" fill="none" stroke="#c6c6c6" stroke-width="0.8" stroke-linejoin="round"/><path d="M5.6 2.6L8.6 5.6M6.6 3.4L8.4 1.4C9.2 0.8 10.4 2 9.8 2.8L7.8 4.6" fill="none" stroke="#c6c6c6" stroke-width="0.9"/><path d="M10.8 8.8V10.8H8.8" fill="none" stroke="#bdbdbd" stroke-width="0.7"/></g></svg>
<div style="left:4.80px;top:343.50px;width:14.20px;height:0.70px;background:#2a2a2a;"></div>
<svg style="left:6px;top:350px;" width="13" height="13" viewBox="0 0 13 13"><g transform="translate(0.70 0.70)"><path d="M3.2 6V2.6C3.2 1.8 4.4 1.8 4.4 2.6V1.8C4.4 1 5.6 1 5.6 1.8V2.2C5.6 1.4 6.8 1.4 6.8 2.2V3C6.8 2.4 8 2.4 8 3.2V6.8C8 8.8 7 9.8 5.4 9.8C4 9.8 3.4 9.2 2.6 8L1.4 6.2C1 5.4 2 4.8 2.6 5.6Z" fill="none" stroke="#c6c6c6" stroke-width="0.75" stroke-linejoin="round"/></g></svg>
<svg style="left:6px;top:368px;" width="13" height="13" viewBox="0 0 13 13"><g transform="translate(0.70 0.20)"><circle cx="6.4" cy="4.4" r="2.9" fill="none" stroke="#c6c6c6" stroke-width="0.9"/><path d="M4.2 6.6L1.4 9.4" stroke="#c6c6c6" stroke-width="1.3" stroke-linecap="round"/></g></svg>
<div style="left:2.40px;top:383.80px;width:18.40px;height:7.90px;background:#4a4a4a;"></div>
<svg style="left:7px;top:386px;" width="4" height="4" viewBox="0 0 4 4"><g transform="translate(0.20 0.70)"><circle cx="1" cy="1" r="0.95" fill="#f2f2f2"/></g></svg>
<svg style="left:11px;top:386px;" width="4" height="4" viewBox="0 0 4 4"><g transform="translate(0.20 0.70)"><circle cx="1" cy="1" r="0.95" fill="#f2f2f2"/></g></svg>
<svg style="left:15px;top:386px;" width="4" height="4" viewBox="0 0 4 4"><g transform="translate(0.20 0.70)"><circle cx="1" cy="1" r="0.95" fill="#f2f2f2"/></g></svg>
<svg style="left:5px;top:401px;" width="14" height="28" viewBox="0 0 14 28"><g transform="translate(0.40 0.80)"><circle cx="6.3" cy="12.6" r="5.9" fill="#fff"/><path d="M1.8 15.4L6.4 10.8" stroke="#ee3a3a" stroke-width="0.9"/><circle cx="6.3" cy="6.3" r="4.9" fill="#fdfdfd" stroke="#050505" stroke-width="2.4"/><path d="M2.8 6.3H9.8A3.5 2.6 0 0 1 2.8 6.3Z" fill="#b4b4b4"/><path d="M3.8 20.6C4.6 22.8 8 22.8 8.8 20.6" fill="none" stroke="#7a7a7a" stroke-width="0.7"/></g></svg>
<div style="left:32.70px;top:253.40px;width:21.20px;height:44.20px;background:#313131;border-radius:2px"></div>
<div style="left:32.70px;top:253.40px;width:21.20px;height:7.50px;background:#242424;border-radius:2px 2px 0 0"></div>
<div style="left:38.60px;top:256.60px;width:9.80px;height:1.00px;background:#3e3e3e;border-radius:0.5px"></div>
<div style="left:35.80px;top:263.80px;width:14.80px;height:14.60px;background:#1c1c1c;border-radius:3px;box-shadow:0 0 0 0.5px #3e3e3e"></div>
<svg style="left:38px;top:266px;" width="12" height="11" viewBox="0 0 12 11"><g transform="translate(0.30 0.00)"><path d="M2.4 1.8L8.2 5L2.8 8.2Z" fill="none" stroke="#c8c8c8" stroke-width="0.85" stroke-linejoin="round"/></g></svg>
<svg style="left:38px;top:283px;" width="12" height="12" viewBox="0 0 12 12"><g transform="translate(0.30 0.40)"><path d="M2.2 8L8.4 2.2M3.6 2H8.6V7" fill="none" stroke="#d6d6d6" stroke-width="0.9"/><circle cx="2.6" cy="7.6" r="1.5" fill="#d6d6d6"/></g></svg>
<div style="left:499.20px;top:59.00px;width:148.80px;height:13.60px;background:#202020;"></div>
<div style="left:502.20px;top:61.70px;width:2.00px;height:9.10px;background:#3a3a3a;border-radius:1px"></div>
<svg style="left:640px;top:61px;" width="9" height="10" viewBox="0 0 9 10"><g transform="translate(0.00 0.60)"><rect x="0.4" y="0.4" width="7.6" height="7.6" rx="1" fill="#2a2a2a" stroke="#8c8c8c" stroke-width="0.7"/><path d="M2.6 3.2L4.2 5L5.8 3.2" fill="none" stroke="#fff" stroke-width="1.1"/></g></svg>
<span class="t" style="left:510.70px;top:60.80px;font-size:6px;color:#d6d6d6;font-weight:400;transform:scaleX(0.666);">カラー</span>
<span class="t" style="left:527.00px;top:60.80px;font-size:6px;color:#d6d6d6;font-weight:400;transform:scaleX(0.759);">スウォッチ</span>
<div style="left:550.20px;top:61.20px;width:20.60px;height:9.80px;background:#3c3c3c;border-radius:1.5px"></div>
<span class="t" style="left:552.70px;top:60.80px;font-size:6px;color:#ffffff;font-weight:700;transform:scaleX(0.860);">境界線</span>
<span class="t" style="left:573.70px;top:60.80px;font-size:6px;color:#d6d6d6;font-weight:400;transform:scaleX(0.743);">アピアランス</span>
<span class="t" style="left:504.00px;top:76.80px;font-size:6px;color:#acacac;font-weight:400;transform:scaleX(0.801);">スタイル:</span>
<span class="t" style="left:504.00px;top:90.10px;font-size:6px;color:#acacac;font-weight:400;transform:scaleX(0.860);">幅:</span>
<span class="t" style="left:504.00px;top:102.50px;font-size:6px;color:#acacac;font-weight:400;transform:scaleX(0.907);">線端:</span>
<span class="t" style="left:504.00px;top:115.10px;font-size:6px;color:#acacac;font-weight:400;transform:scaleX(0.907);">結合:</span>
<span class="t" style="left:504.00px;top:128.10px;font-size:6px;color:#acacac;font-weight:400;transform:scaleX(0.907);">整列:</span>
<span class="t" style="left:504.00px;top:151.30px;font-size:6px;color:#acacac;font-weight:400;transform:scaleX(0.907);">順序:</span>
<span class="t" style="left:504.00px;top:175.40px;font-size:6px;color:#acacac;font-weight:400;transform:scaleX(0.892);">開始:</span>
<span class="t" style="left:504.00px;top:189.20px;font-size:6px;color:#acacac;font-weight:400;transform:scaleX(0.869);">終了位置:</span>
<div style="left:529.50px;top:77.60px;width:52.30px;height:9.60px;background:#2f2f2f;border-radius:2px;box-shadow:0 0 0 0.5px #404040"></div>
<svg style="left:532px;top:78px;" width="10" height="10" viewBox="0 0 10 10"><g transform="translate(0.10 0.40)"><circle cx="4" cy="4" r="3.3" fill="none" stroke="#d8d8d8" stroke-width="0.8"/><circle cx="4" cy="4" r="1.1" fill="#d8d8d8"/></g></svg>
<div style="left:542.80px;top:77.70px;width:12.40px;height:9.40px;background:#191919;border-radius:2.2px;box-shadow:0 0 0 0.6px #555555"></div>
<svg style="left:545px;top:78px;" width="9" height="10" viewBox="0 0 9 10"><g transform="translate(0.00 0.40)"><path d="M0.6 6.8L7.4 1.2" stroke="#fff" stroke-width="0.9"/></g></svg>
<svg style="left:557px;top:78px;" width="10" height="10" viewBox="0 0 10 10"><g transform="translate(0.30 0.40)"><path d="M1 7L7 1" stroke="#9a9a9a" stroke-width="0.9" stroke-dasharray="1.6 1"/></g></svg>
<svg style="left:570px;top:78px;" width="10" height="10" viewBox="0 0 10 10"><g transform="translate(0.40 0.40)"><path d="M1.2 6.8L6.8 1.2" stroke="#b0b0b0" stroke-width="2.6" stroke-linecap="round"/><path d="M1.6 6.4L6.4 1.6" stroke="#3a3a3a" stroke-width="0.8" stroke-dasharray="1.2 1"/></g></svg>
<div style="left:530.50px;top:94.60px;width:89.50px;height:1.00px;background:#1a1a1a;border-radius:0.5px"></div>
<div style="left:530.50px;top:94.40px;width:5.50px;height:1.40px;background:#2e86e6;border-radius:0.5px"></div>
<svg style="left:534px;top:92px;" width="8" height="7" viewBox="0 0 8 7"><g transform="translate(0.60 0.30)"><circle cx="2.8" cy="2.8" r="2.7" fill="#f4f4f4"/></g></svg>
<div style="left:623.30px;top:91.40px;width:24.70px;height:7.60px;background:#1c1c1c;border-radius:1.5px 0 0 1.5px"></div>
<span class="t" style="left:626.30px;top:90.20px;font-size:6px;color:#ffffff;font-weight:700;transform:scaleX(0.810);">0.2 pt</span>
<div style="left:529.50px;top:102.90px;width:38.70px;height:9.40px;background:#2f2f2f;border-radius:2px;box-shadow:0 0 0 0.5px #404040"></div>
<div style="left:530.00px;top:103.20px;width:11.60px;height:8.80px;background:#191919;border-radius:2.2px;box-shadow:0 0 0 0.6px #555555"></div>
<svg style="left:531px;top:104px;" width="11" height="9" viewBox="0 0 11 9"><g transform="translate(0.30 0.10)"><rect x="0.6" y="1" width="7.6" height="5" rx="0.6" fill="none" stroke="#e0e0e0" stroke-width="0.8"/><path d="M3 3.5H6.6" stroke="#e0e0e0" stroke-width="0.7"/><circle cx="6.6" cy="3.5" r="0.9" fill="#e0e0e0"/></g></svg>
<svg style="left:544px;top:104px;" width="11" height="9" viewBox="0 0 11 9"><g transform="translate(0.10 0.10)"><rect x="0.6" y="1" width="5.6" height="5" fill="none" stroke="#e0e0e0" stroke-width="0.8"/><path d="M3 3.5H7" stroke="#e0e0e0" stroke-width="0.7"/><circle cx="7.4" cy="3.5" r="1" fill="none" stroke="#e0e0e0" stroke-width="0.6"/></g></svg>
<svg style="left:557px;top:104px;" width="11" height="9" viewBox="0 0 11 9"><g transform="translate(0.10 0.10)"><rect x="0.6" y="1" width="7.6" height="5" fill="none" stroke="#e0e0e0" stroke-width="0.8"/><path d="M3 3.5H6" stroke="#e0e0e0" stroke-width="0.7"/><rect x="5.4" y="2.6" width="1.8" height="1.8" fill="#e0e0e0"/></g></svg>
<div style="left:529.50px;top:115.40px;width:38.70px;height:9.40px;background:#2f2f2f;border-radius:2px;box-shadow:0 0 0 0.5px #404040"></div>
<div style="left:530.00px;top:115.70px;width:11.60px;height:8.80px;background:#191919;border-radius:2.2px;box-shadow:0 0 0 0.6px #555555"></div>
<svg style="left:531px;top:116px;" width="11" height="9" viewBox="0 0 11 9"><g transform="translate(0.30 0.60)"><path d="M1.6 0.6C1.6 3.4 3.4 5.4 7.4 5.4V6.8H0.6V0.6Z" fill="none" stroke="#e0e0e0" stroke-width="0.8"/><path d="M3.4 1.2V3.6C3.6 4.4 4.4 5 5.4 5" stroke="#e0e0e0" stroke-width="1.2" fill="none"/></g></svg>
<svg style="left:544px;top:116px;" width="11" height="9" viewBox="0 0 11 9"><g transform="translate(0.10 0.60)"><path d="M1.2 0.6C1.2 3.4 3.4 5 7.4 5" fill="none" stroke="#a8a8a8" stroke-width="0.8"/><path d="M3.6 1V3.4L5.2 4.8H7.6V6.8H3.2Z" fill="#a8a8a8"/></g></svg>
<svg style="left:557px;top:116px;" width="11" height="9" viewBox="0 0 11 9"><g transform="translate(0.10 0.60)"><path d="M1.4 0.6V6.6H7.6" fill="none" stroke="#b8b8b8" stroke-width="0.8"/><path d="M3 1.4H5V3.6H7.6V6.2H3Z" fill="#c8c8c8"/></g></svg>
<div style="left:623.30px;top:115.60px;width:24.70px;height:8.00px;background:#1c1c1c;border-radius:1.5px 0 0 1.5px"></div>
<span class="t" style="left:604.80px;top:114.80px;font-size:6px;color:#acacac;font-weight:400;transform:scaleX(0.710);">マイター:</span>
<span class="t" style="left:626.40px;top:114.80px;font-size:6px;color:#e6e6e6;font-weight:500;transform:scaleX(0.791);">1.5</span>
<div style="left:529.50px;top:128.40px;width:38.70px;height:9.40px;background:#2f2f2f;border-radius:2px;box-shadow:0 0 0 0.5px #404040"></div>
<div style="left:530.00px;top:128.70px;width:11.60px;height:8.80px;background:#191919;border-radius:2.2px;box-shadow:0 0 0 0.6px #555555"></div>
<svg style="left:531px;top:129px;" width="11" height="9" viewBox="0 0 11 9"><g transform="translate(0.30 0.60)"><path d="M1.4 6.8V1.2H7.6" fill="none" stroke="#e0e0e0" stroke-width="0.8"/><path d="M2.6 6.8V2.4H7.6V4.6H4.8V6.8Z" fill="#fff"/></g></svg>
<svg style="left:544px;top:129px;" width="11" height="9" viewBox="0 0 11 9"><g transform="translate(0.10 0.60)"><path d="M2.6 6.8V2.4H7.6" fill="none" stroke="#e0e0e0" stroke-width="0.7" stroke-dasharray="1 0.8"/><path d="M1.2 6.8V1H7.6V3.4H3.8V6.8Z" fill="#e6e6e6"/></g></svg>
<svg style="left:557px;top:129px;" width="11" height="9" viewBox="0 0 11 9"><g transform="translate(0.10 0.60)"><path d="M1.4 6.8V1.2H7.6" fill="none" stroke="#e0e0e0" stroke-width="0.8"/><path d="M3.4 6.8V3.2H7.6V5.2H5.4V6.8Z" fill="#e6e6e6"/></g></svg>
<div style="left:503.00px;top:142.80px;width:145.00px;height:0.70px;background:#3e3e3e;"></div>
<div style="left:529.50px;top:151.50px;width:25.90px;height:9.50px;background:#2f2f2f;border-radius:2px;box-shadow:0 0 0 0.5px #404040"></div>
<div style="left:543.20px;top:151.90px;width:11.60px;height:8.80px;background:#191919;border-radius:2.2px;box-shadow:0 0 0 0.6px #555555"></div>
<svg style="left:532px;top:152px;" width="10" height="9" viewBox="0 0 10 9"><g transform="translate(0.40 0.80)"><rect x="0.6" y="0.6" width="4.4" height="4.4" rx="0.8" fill="#e6e6e6"/><rect x="3" y="2.6" width="4.4" height="4" rx="0.8" fill="#e6e6e6" stroke="#3a3a3a" stroke-width="0.5"/></g></svg>
<svg style="left:545px;top:152px;" width="10" height="9" viewBox="0 0 10 9"><g transform="translate(0.20 0.80)"><rect x="0.6" y="0.6" width="4.4" height="4.4" rx="0.8" fill="none" stroke="#e6e6e6" stroke-width="0.8"/><rect x="3" y="2.6" width="4.4" height="4" rx="0.8" fill="#e6e6e6"/></g></svg>
<div style="left:576.10px;top:153.10px;width:5.50px;height:5.70px;background:#1e1e1e;border-radius:0.8px"></div>
<span class="t" style="left:583.80px;top:151.30px;font-size:6px;color:#c4c4c4;font-weight:400;transform:scaleX(0.809);">オブジェクトとともにスケーリング</span>
<div style="left:503.00px;top:167.00px;width:145.00px;height:0.70px;background:#3e3e3e;"></div>
<div style="left:530.00px;top:176.90px;width:21.80px;height:9.80px;background:#474747;border-radius:1.5px"></div>
<div style="left:535.40px;top:181.25px;width:7.40px;height:1.10px;background:#ffffff;"></div>
<svg style="left:545px;top:180px;" width="6" height="5" viewBox="0 0 6 5"><g transform="translate(0.10 0.40)"><path d="M0.3 0.4L2.2 2.3L4.1 0.4" fill="none" stroke="#e0e0e0" stroke-width="0.8"/></g></svg>
<div style="left:555.00px;top:176.90px;width:32.20px;height:9.80px;background:#2e2e2e;border-radius:1.5px"></div>
<span class="t" style="left:558.20px;top:177.00px;font-size:7px;color:#858585;font-weight:400;transform:scaleX(0.730);">100 %</span>
<svg style="left:581px;top:180px;" width="7" height="5" viewBox="0 0 7 5"><g transform="translate(0.60 0.40)"><path d="M0.3 0.4L2.2 2.3L4.1 0.4" fill="none" stroke="#6a6a6a" stroke-width="0.7"/></g></svg>
<div style="left:530.00px;top:190.20px;width:21.80px;height:9.80px;background:#474747;border-radius:1.5px"></div>
<div style="left:535.40px;top:194.55px;width:7.40px;height:1.10px;background:#ffffff;"></div>
<svg style="left:545px;top:193px;" width="6" height="5" viewBox="0 0 6 5"><g transform="translate(0.10 0.70)"><path d="M0.3 0.4L2.2 2.3L4.1 0.4" fill="none" stroke="#e0e0e0" stroke-width="0.8"/></g></svg>
<div style="left:555.00px;top:190.20px;width:32.20px;height:9.80px;background:#2e2e2e;border-radius:1.5px"></div>
<span class="t" style="left:558.20px;top:190.30px;font-size:7px;color:#858585;font-weight:400;transform:scaleX(0.730);">100 %</span>
<svg style="left:581px;top:193px;" width="7" height="5" viewBox="0 0 7 5"><g transform="translate(0.60 0.70)"><path d="M0.3 0.4L2.2 2.3L4.1 0.4" fill="none" stroke="#6a6a6a" stroke-width="0.7"/></g></svg>
<svg style="left:589px;top:182px;" width="6" height="11" viewBox="0 0 6 11"><g transform="translate(0.00 0.20)"><rect x="0.5" y="0.5" width="3.2" height="8.6" rx="1" fill="none" stroke="#727272" stroke-width="0.7"/></g></svg>
<div style="left:619.00px;top:176.60px;width:26.20px;height:10.00px;background:#2f2f2f;border-radius:2px;box-shadow:0 0 0 0.5px #404040"></div>
<div style="left:619.40px;top:176.90px;width:12.20px;height:9.40px;background:#191919;border-radius:2.2px;box-shadow:0 0 0 0.6px #555555"></div>
<svg style="left:621px;top:178px;" width="11" height="9" viewBox="0 0 11 9"><g transform="translate(0.00 0.40)"><path d="M0.6 0.8L5.8 3.5L0.6 6.2M0.6 2.2L4 3.5L0.6 4.8" fill="none" stroke="#fff" stroke-width="0.8"/><circle cx="7.2" cy="3.5" r="1.3" fill="none" stroke="#fff" stroke-width="0.7"/></g></svg>
<svg style="left:633px;top:178px;" width="11" height="9" viewBox="0 0 11 9"><g transform="translate(0.50 0.40)"><path d="M0.6 3.5L4.6 0.8L8.6 3.5L4.6 6.2Z" fill="none" stroke="#f0f0f0" stroke-width="0.8"/><circle cx="4.6" cy="3.5" r="0.9" fill="#f0f0f0"/></g></svg>
<svg style="left:622px;top:191px;" width="10" height="9" viewBox="0 0 10 9"><g transform="translate(0.00 0.60)"><path d="M0.4 2H6M8.2 5H2.6" fill="none" stroke="#dcdcdc" stroke-width="1.2"/><path d="M5.2 0L8 2L5.2 4ZM3.4 3L0.6 5L3.4 7Z" fill="#dcdcdc"/></g></svg>
<svg style="left:637px;top:190px;" width="9" height="11" viewBox="0 0 9 11"><g transform="translate(0.80 0.60)"><rect x="0.8" y="2" width="4.8" height="6.4" rx="1" fill="none" stroke="#d0d0d0" stroke-width="0.8"/><path d="M0 1.8H6.4M2.2 0.6H4.2M2.4 3.6V6.8M4 3.6V6.8" stroke="#d0d0d0" stroke-width="0.7"/></g></svg>
<div style="left:503.00px;top:205.40px;width:145.00px;height:0.70px;background:#3a3a3a;"></div>
<div style="left:504.00px;top:215.60px;width:36.80px;height:10.20px;background:#4a4a4a;border-radius:1.5px"></div>
<span class="t" style="left:509.00px;top:215.90px;font-size:6.4px;color:#ffffff;font-weight:700;transform:scaleX(0.780);">プロパティ...</span>
<span class="t" style="left:545.30px;top:216.30px;font-size:6px;color:#acacac;font-weight:400;transform:scaleX(0.900);">筆圧:</span>
<div style="left:560.80px;top:216.90px;width:38.80px;height:8.10px;background:#4e4e4e;border-radius:1px;box-shadow:inset 0 0.6px 0 #6c6c6c"></div>
<div style="left:499.20px;top:233.60px;width:148.80px;height:1.30px;background:#181818;"></div>
<div style="left:499.20px;top:234.90px;width:148.80px;height:13.60px;background:#202020;"></div>
<div style="left:502.20px;top:237.60px;width:2.00px;height:9.10px;background:#3a3a3a;border-radius:1px"></div>
<svg style="left:640px;top:237px;" width="9" height="10" viewBox="0 0 9 10"><g transform="translate(0.00 0.50)"><rect x="0.4" y="0.4" width="7.6" height="7.6" rx="1" fill="#2a2a2a" stroke="#8c8c8c" stroke-width="0.7"/><path d="M2.6 3.2L4.2 5L5.8 3.2" fill="none" stroke="#fff" stroke-width="1.1"/></g></svg>
<span class="t" style="left:510.70px;top:236.80px;font-size:6px;color:#d6d6d6;font-weight:400;transform:scaleX(0.687);">レイヤー</span>
<span class="t" style="left:532.00px;top:236.80px;font-size:6px;color:#d6d6d6;font-weight:400;transform:scaleX(0.768);">パスブラシ</span>
<span class="t" style="left:557.90px;top:236.80px;font-size:6px;color:#d6d6d6;font-weight:400;transform:scaleX(0.738);">クイックFX</span>
<div style="left:581.80px;top:237.20px;width:21.00px;height:9.80px;background:#3c3c3c;border-radius:1.5px"></div>
<span class="t" style="left:584.30px;top:236.80px;font-size:6px;color:#ffffff;font-weight:700;transform:scaleX(0.716);">スタイル</span>
<div style="left:502.30px;top:251.90px;width:145.70px;height:9.90px;background:#1a1a1a;border-radius:1.5px 0 0 1.5px"></div>
<svg style="left:504px;top:253px;" width="8" height="9" viewBox="0 0 8 9"><g transform="translate(0.30 0.80)"><circle cx="2.5" cy="2.5" r="2" fill="none" stroke="#e4e4e4" stroke-width="0.9"/><path d="M4 4L6 6" stroke="#e4e4e4" stroke-width="1.1"/></g></svg>
<span class="t" style="left:512.20px;top:252.10px;font-size:6px;color:#6e6e6e;font-weight:500;transform:scaleX(0.866);">検索</span>
<div style="left:502.80px;top:265.50px;width:57.50px;height:9.90px;background:#474747;border-radius:1.5px"></div>
<span class="t" style="left:515.20px;top:265.60px;font-size:6px;color:#ffffff;font-weight:700;transform:scaleX(0.734);">デフォルト</span>
<svg style="left:554px;top:269px;" width="6" height="4" viewBox="0 0 6 4"><g transform="translate(0.60 0.40)"><path d="M0.3 0.3L2 2L3.7 0.3" fill="none" stroke="#9a9a9a" stroke-width="0.7"/></g></svg>
<svg style="left:0px;top:0px;" width="2" height="2" viewBox="0 0 2 2"><g transform="translate(0.00 0.00)"><defs>
<linearGradient id="gu" x1="0.1" y1="0" x2="0.9" y2="1"><stop offset="0" stop-color="#22e070"/><stop offset="0.3" stop-color="#20d8e8"/><stop offset="0.55" stop-color="#3a8cff"/><stop offset="0.8" stop-color="#e040e0"/><stop offset="1" stop-color="#ff3c8c"/></linearGradient>
<linearGradient id="gu2" x1="0" y1="1" x2="1" y2="0"><stop offset="0" stop-color="#ffe11e"/><stop offset="0.35" stop-color="#ff4fa0"/><stop offset="0.65" stop-color="#8a5cff"/><stop offset="1" stop-color="#2fe0c0"/></linearGradient>
<clipPath id="rc"><rect x="0" y="0" width="21" height="21" rx="5"/></clipPath>
</defs></g></svg>
<div style="left:500.30px;top:280.90px;width:35.50px;height:31.90px;background:#414141;"></div>
<div style="left:508.30px;top:282.90px;width:21.00px;height:21.00px;background:conic-gradient(from -30deg,#30e070,#20d8e0,#2f9cff,#7a5cff,#e040e0,#ff3c7c,#ff9030,#f0e020,#30e070);border-radius:5px"></div>
<svg style="left:508px;top:283px;" width="23" height="23" viewBox="0 0 23 23"><g transform="translate(0.20 0.10)"><rect x="2.4" y="2.4" width="16.2" height="16.2" rx="3" fill="#e6eef8"/><path d="M10.5 4.6L16.4 10.5L10.5 16.4L4.6 10.5Z" fill="none" stroke="url(#gu2)" stroke-width="1.6"/><path d="M10.5 5.8L15.2 10.5L10.5 15.2L5.8 10.5Z" fill="#505050"/></g></svg>
<span class="t" style="left:510.75px;top:303.10px;font-size:4.7px;color:#f2f2f2;font-weight:700;transform:scaleX(0.695);">ユニコーン</span>
<div style="left:538.20px;top:280.90px;width:35.50px;height:31.90px;background:#414141;"></div>
<svg style="left:546px;top:283px;" width="23" height="23" viewBox="0 0 23 23"><g transform="translate(0.10 0.10)"><rect width="21" height="21" rx="5" fill="#5fa6e4"/><path d="M10.5 5.8L15.2 10.5L10.5 15.2L5.8 10.5Z" fill="#505050"/></g></svg>
<span class="t" style="left:553.15px;top:303.10px;font-size:4.7px;color:#f2f2f2;font-weight:700;transform:scaleX(0.727);">ルナ</span>
<div style="left:576.10px;top:280.90px;width:35.50px;height:31.90px;background:#414141;"></div>
<svg style="left:584px;top:283px;" width="22" height="23" viewBox="0 0 22 23"><g transform="translate(0.00 0.10)"><rect width="21" height="21" rx="5" fill="#e3a6ac"/><g clip-path="url(#rc)" fill="#b98088"><circle cx="0.0" cy="0.0" r="0.5"/><circle cx="9.0" cy="13.6" r="0.7"/><circle cx="4.4" cy="10.0" r="0.9"/><circle cx="7.2" cy="10.2" r="0.5"/><circle cx="17.4" cy="14.2" r="0.7"/><circle cx="14.0" cy="1.0" r="0.9"/><circle cx="18.0" cy="12.6" r="0.5"/><circle cx="8.4" cy="7.0" r="0.7"/><circle cx="6.2" cy="5.2" r="0.9"/><circle cx="11.4" cy="7.2" r="0.5"/><circle cx="3.0" cy="13.0" r="0.7"/><circle cx="2.0" cy="1.6" r="0.9"/><circle cx="8.4" cy="15.0" r="0.5"/><circle cx="1.2" cy="11.2" r="0.7"/><circle cx="1.4" cy="11.2" r="0.9"/><circle cx="9.0" cy="15.0" r="0.5"/><circle cx="3.0" cy="1.6" r="0.7"/><circle cx="4.4" cy="13.0" r="0.9"/><circle cx="13.2" cy="7.2" r="0.5"/><circle cx="8.4" cy="5.2" r="0.7"/><circle cx="11.0" cy="7.0" r="0.9"/><circle cx="0.0" cy="12.6" r="0.5"/><circle cx="17.4" cy="1.0" r="0.7"/><circle cx="0.2" cy="14.2" r="0.9"/><circle cx="11.4" cy="10.2" r="0.5"/><circle cx="9.0" cy="10.0" r="0.7"/><circle cx="14.0" cy="13.6" r="0.9"/><circle cx="5.4" cy="0.0" r="0.5"/><circle cx="4.2" cy="11.2" r="0.7"/><circle cx="10.4" cy="5.2" r="0.9"/><circle cx="3.0" cy="3.0" r="0.5"/><circle cx="3.0" cy="4.6" r="0.7"/><circle cx="10.4" cy="10.0" r="0.9"/><circle cx="4.2" cy="19.2" r="0.5"/><circle cx="5.4" cy="11.2" r="0.7"/><circle cx="14.0" cy="7.0" r="0.9"/><circle cx="9.0" cy="6.6" r="0.5"/><circle cx="11.4" cy="10.0" r="0.7"/><circle cx="0.2" cy="17.2" r="0.9"/><circle cx="17.4" cy="7.2" r="0.5"/><circle cx="0.0" cy="1.0" r="0.7"/><circle cx="11.0" cy="19.6" r="0.9"/><circle cx="8.4" cy="0.0" r="0.5"/><circle cx="13.2" cy="5.2" r="0.7"/><circle cx="4.4" cy="14.2" r="0.9"/><circle cx="3.0" cy="6.0" r="0.5"/><circle cx="9.0" cy="1.6" r="0.7"/><circle cx="1.4" cy="1.0" r="0.9"/><circle cx="1.2" cy="4.2" r="0.5"/><circle cx="8.4" cy="11.2" r="0.7"/><circle cx="2.0" cy="1.0" r="0.9"/><circle cx="3.0" cy="15.6" r="0.5"/><circle cx="11.4" cy="13.0" r="0.7"/><circle cx="6.2" cy="14.2" r="0.9"/><circle cx="8.4" cy="19.2" r="0.5"/><circle cx="18.0" cy="7.0" r="0.7"/><circle cx="14.0" cy="19.6" r="0.9"/><circle cx="17.4" cy="15.0" r="0.5"/><circle cx="7.2" cy="14.2" r="0.7"/><circle cx="4.4" cy="17.2" r="0.9"/></g><path d="M10.5 5.8L15.2 10.5L10.5 15.2L5.8 10.5Z" fill="#505050"/></g></svg>
<span class="t" style="left:584.55px;top:303.10px;font-size:4.7px;color:#f2f2f2;font-weight:700;transform:scaleX(0.853);">いんげん豆</span>
<div style="left:614.00px;top:280.90px;width:34.00px;height:31.90px;background:#414141;"></div>
<svg style="left:621px;top:283px;" width="23" height="23" viewBox="0 0 23 23"><g transform="translate(0.90 0.10)"><rect width="21" height="21" rx="5" fill="#7ef0b4"/><g clip-path="url(#rc)" fill="none" stroke="#1f6a48" stroke-width="2" stroke-linecap="round"><path d="M2 3C5 0 8 5 11 2S17 1 20 4M1 10C3 7 5 12 4 15M17 8C20 10 16 13 20 16M2 19C6 15 9 21 13 18S18 16 21 19M14 4C16 6 14 7 17 8"/></g><path d="M10.5 5.8L15.2 10.5L10.5 15.2L5.8 10.5Z" fill="#505050"/></g></svg>
<span class="t" style="left:627.70px;top:303.10px;font-size:4.7px;color:#f2f2f2;font-weight:700;transform:scaleX(0.694);">こんぶ</span>
<div style="left:500.30px;top:315.00px;width:35.50px;height:32.00px;background:#414141;"></div>
<svg style="left:508px;top:317px;" width="23" height="23" viewBox="0 0 23 23"><g transform="translate(0.20 0.20)"><rect width="21" height="21" rx="5" fill="#8a3fd0"/><g clip-path="url(#rc)"><path d="M-2 9L9 -2M-2 20L20 -2M4 24L24 4" stroke="#2f9a70" stroke-width="2.6"/><path d="M-2 14L14 -2M0 24L24 0" stroke="#e040b0" stroke-width="1.4"/></g><rect x="0.5" y="0.5" width="20" height="20" rx="4.6" fill="none" stroke="#e23cc0" stroke-width="1"/><path d="M10.5 5.8L15.2 10.5L10.5 15.2L5.8 10.5Z" fill="#505050"/></g></svg>
<span class="t" style="left:510.25px;top:337.00px;font-size:4.7px;color:#f2f2f2;font-weight:700;transform:scaleX(0.753);">ビンテージ</span>
<div style="left:538.20px;top:315.00px;width:35.50px;height:32.00px;background:#414141;"></div>
<svg style="left:546px;top:317px;" width="23" height="23" viewBox="0 0 23 23"><g transform="translate(0.10 0.20)"><rect width="21" height="21" rx="5" fill="#ff9a1a"/><g clip-path="url(#rc)"><path d="M-2 12L12 -2M6 24L24 6" stroke="#8a2a12" stroke-width="2.4"/><path d="M-2 17L17 -2" stroke="#c8501a" stroke-width="1.2"/></g><path d="M10.5 5.8L15.2 10.5L10.5 15.2L5.8 10.5Z" fill="#505050"/></g></svg>
<span class="t" style="left:546.40px;top:337.00px;font-size:4.7px;color:#f2f2f2;font-weight:700;transform:scaleX(0.791);">フェニックス</span>
<div style="left:576.10px;top:315.00px;width:35.50px;height:32.00px;background:#414141;"></div>
<svg style="left:584px;top:317px;" width="22" height="23" viewBox="0 0 22 23"><g transform="translate(0.00 0.20)"><rect width="21" height="21" rx="5" fill="#f4604a"/><g clip-path="url(#rc)" fill="#a23a3a"><circle cx="4" cy="4.4" r="2.9"/><circle cx="12" cy="2.6" r="2.7"/><circle cx="18.4" cy="8" r="2.9"/><circle cx="2.8" cy="12.6" r="2.9"/><circle cx="6.4" cy="18.6" r="2.9"/><circle cx="14.6" cy="18.8" r="2.9"/><circle cx="19.6" cy="15" r="2.2"/></g><path d="M10.5 5.8L15.2 10.5L10.5 15.2L5.8 10.5Z" fill="#505050"/></g></svg>
<span class="t" style="left:584.55px;top:337.00px;font-size:4.7px;color:#f2f2f2;font-weight:700;transform:scaleX(0.768);">ハーフトーン</span>
<div style="left:499.20px;top:398.30px;width:148.80px;height:1.30px;background:#181818;"></div>
<div style="left:499.20px;top:399.60px;width:148.80px;height:15.00px;background:#202020;"></div>
<div style="left:502.20px;top:402.30px;width:2.00px;height:10.50px;background:#3a3a3a;border-radius:1px"></div>
<svg style="left:640px;top:402px;" width="9" height="11" viewBox="0 0 9 11"><g transform="translate(0.00 0.90)"><rect x="0.4" y="0.4" width="7.6" height="7.6" rx="1" fill="#2a2a2a" stroke="#8c8c8c" stroke-width="0.7"/><path d="M2.6 3.2L4.2 5L5.8 3.2" fill="none" stroke="#fff" stroke-width="1.1"/></g></svg>
<div style="left:508.20px;top:402.20px;width:15.10px;height:10.00px;background:#3c3c3c;border-radius:1.5px"></div>
<span class="t" style="left:510.70px;top:402.30px;font-size:6px;color:#ffffff;font-weight:700;transform:scaleX(0.841);">変形</span>
<span class="t" style="left:527.00px;top:402.30px;font-size:6px;color:#d6d6d6;font-weight:400;transform:scaleX(0.691);">ナビゲータ</span>
<span class="t" style="left:551.70px;top:402.30px;font-size:6px;color:#d6d6d6;font-weight:400;transform:scaleX(0.866);">履歴</span>
<span class="t" style="left:567.00px;top:402.30px;font-size:6px;color:#d6d6d6;font-weight:400;transform:scaleX(0.779);">タイポグラフィ</span>
<svg style="left:507px;top:430px;" width="21" height="21" viewBox="0 0 21 21"><g transform="translate(0.30 0.10)"><rect x="1.6" y="1.6" width="15.8" height="15.8" fill="#6e6e6e"/><rect x="-0.4" y="-0.4" width="4" height="4" fill="#fff"/><rect x="0.3" y="8.2" width="2.6" height="2.6" fill="#cccccc"/><rect x="0.3" y="16.1" width="2.6" height="2.6" fill="#cccccc"/><rect x="8.2" y="0.3" width="2.6" height="2.6" fill="#cccccc"/><rect x="8.2" y="8.2" width="2.6" height="2.6" fill="#cccccc"/><rect x="8.2" y="16.1" width="2.6" height="2.6" fill="#cccccc"/><rect x="16.1" y="0.3" width="2.6" height="2.6" fill="#cccccc"/><rect x="16.1" y="8.2" width="2.6" height="2.6" fill="#cccccc"/><rect x="16.1" y="16.1" width="2.6" height="2.6" fill="#cccccc"/></g></svg>
<span class="t" style="left:533.70px;top:420.40px;font-size:6px;color:#acacac;font-weight:400;transform:scaleX(0.776);">X:</span>
<span class="t" style="left:579.90px;top:420.40px;font-size:6px;color:#acacac;font-weight:400;transform:scaleX(0.885);">W:</span>
<span class="t" style="left:533.90px;top:432.30px;font-size:6px;color:#acacac;font-weight:400;transform:scaleX(0.786);">Y:</span>
<span class="t" style="left:581.40px;top:432.30px;font-size:6px;color:#acacac;font-weight:400;transform:scaleX(0.817);">H:</span>
<span class="t" style="left:533.90px;top:446.80px;font-size:6px;color:#686868;font-weight:500;transform:scaleX(0.700);">R:</span>
<span class="t" style="left:581.80px;top:446.80px;font-size:6px;color:#686868;font-weight:500;transform:scaleX(0.740);">S:</span>
<div style="left:540.50px;top:420.80px;width:32.50px;height:9.00px;background:#1c1c1c;border-radius:1.5px"></div>
<span class="t" style="left:543.30px;top:420.40px;font-size:6px;color:#ffffff;font-weight:700;transform:scaleX(0.868);">80 mm</span>
<div style="left:588.60px;top:420.80px;width:32.40px;height:9.00px;background:#1c1c1c;border-radius:1.5px"></div>
<span class="t" style="left:591.40px;top:420.40px;font-size:6px;color:#ffffff;font-weight:700;transform:scaleX(0.873);">80 mm</span>
<div style="left:540.50px;top:432.60px;width:32.50px;height:9.10px;background:#1c1c1c;border-radius:1.5px"></div>
<span class="t" style="left:543.30px;top:432.25px;font-size:6px;color:#ffffff;font-weight:700;transform:scaleX(0.868);">40 mm</span>
<div style="left:588.60px;top:432.60px;width:32.40px;height:9.10px;background:#1c1c1c;border-radius:1.5px"></div>
<span class="t" style="left:591.40px;top:432.25px;font-size:6px;color:#ffffff;font-weight:700;transform:scaleX(0.845);">19.7 mm</span>
<div style="left:540.50px;top:447.50px;width:32.50px;height:8.40px;background:#383838;border-radius:1.5px"></div>
<span class="t" style="left:543.30px;top:446.80px;font-size:6px;color:#707070;font-weight:400;transform:scaleX(0.743);">0 °</span>
<div style="left:588.60px;top:447.50px;width:32.40px;height:8.40px;background:#383838;border-radius:1.5px"></div>
<span class="t" style="left:591.40px;top:446.80px;font-size:6px;color:#707070;font-weight:400;transform:scaleX(0.756);">0 °</span>
<svg style="left:567px;top:450px;" width="6" height="5" viewBox="0 0 6 5"><g transform="translate(0.30 0.70)"><path d="M0.3 0.4L2.2 2.3L4.1 0.4" fill="none" stroke="#777" stroke-width="0.7"/></g></svg>
<svg style="left:615px;top:450px;" width="6" height="5" viewBox="0 0 6 5"><g transform="translate(0.40 0.70)"><path d="M0.3 0.4L2.2 2.3L4.1 0.4" fill="none" stroke="#777" stroke-width="0.7"/></g></svg>
<svg style="left:626px;top:426px;" width="7" height="11" viewBox="0 0 7 11"><g transform="translate(0.60 0.40)"><rect x="0.5" y="0.5" width="3.4" height="8.4" rx="1" fill="none" stroke="#727272" stroke-width="0.7"/></g></svg>
<svg style="left:601px;top:463px;" width="11" height="9" viewBox="0 0 11 9"><g transform="translate(0.00 0.40)"><path d="M0.5 3V1.4C0.5 0.8 0.9 0.5 1.4 0.5H8C8.6 0.5 8.9 0.9 8.9 1.4V6.2C8.9 6.8 8.5 7.1 8 7.1H6" fill="none" stroke="#5a5a5a" stroke-width="0.7" stroke-dasharray="2 0.8"/><rect x="0.8" y="3.6" width="4.2" height="3.4" fill="#5a5a5a"/></g></svg>
<svg style="left:614px;top:465px;" width="7" height="5" viewBox="0 0 7 5"><g transform="translate(0.90 0.60)"><path d="M0.3 0.4L2.2 2.3L4.1 0.4" fill="none" stroke="#ddd" stroke-width="0.8"/></g></svg>
</div></body></html>
